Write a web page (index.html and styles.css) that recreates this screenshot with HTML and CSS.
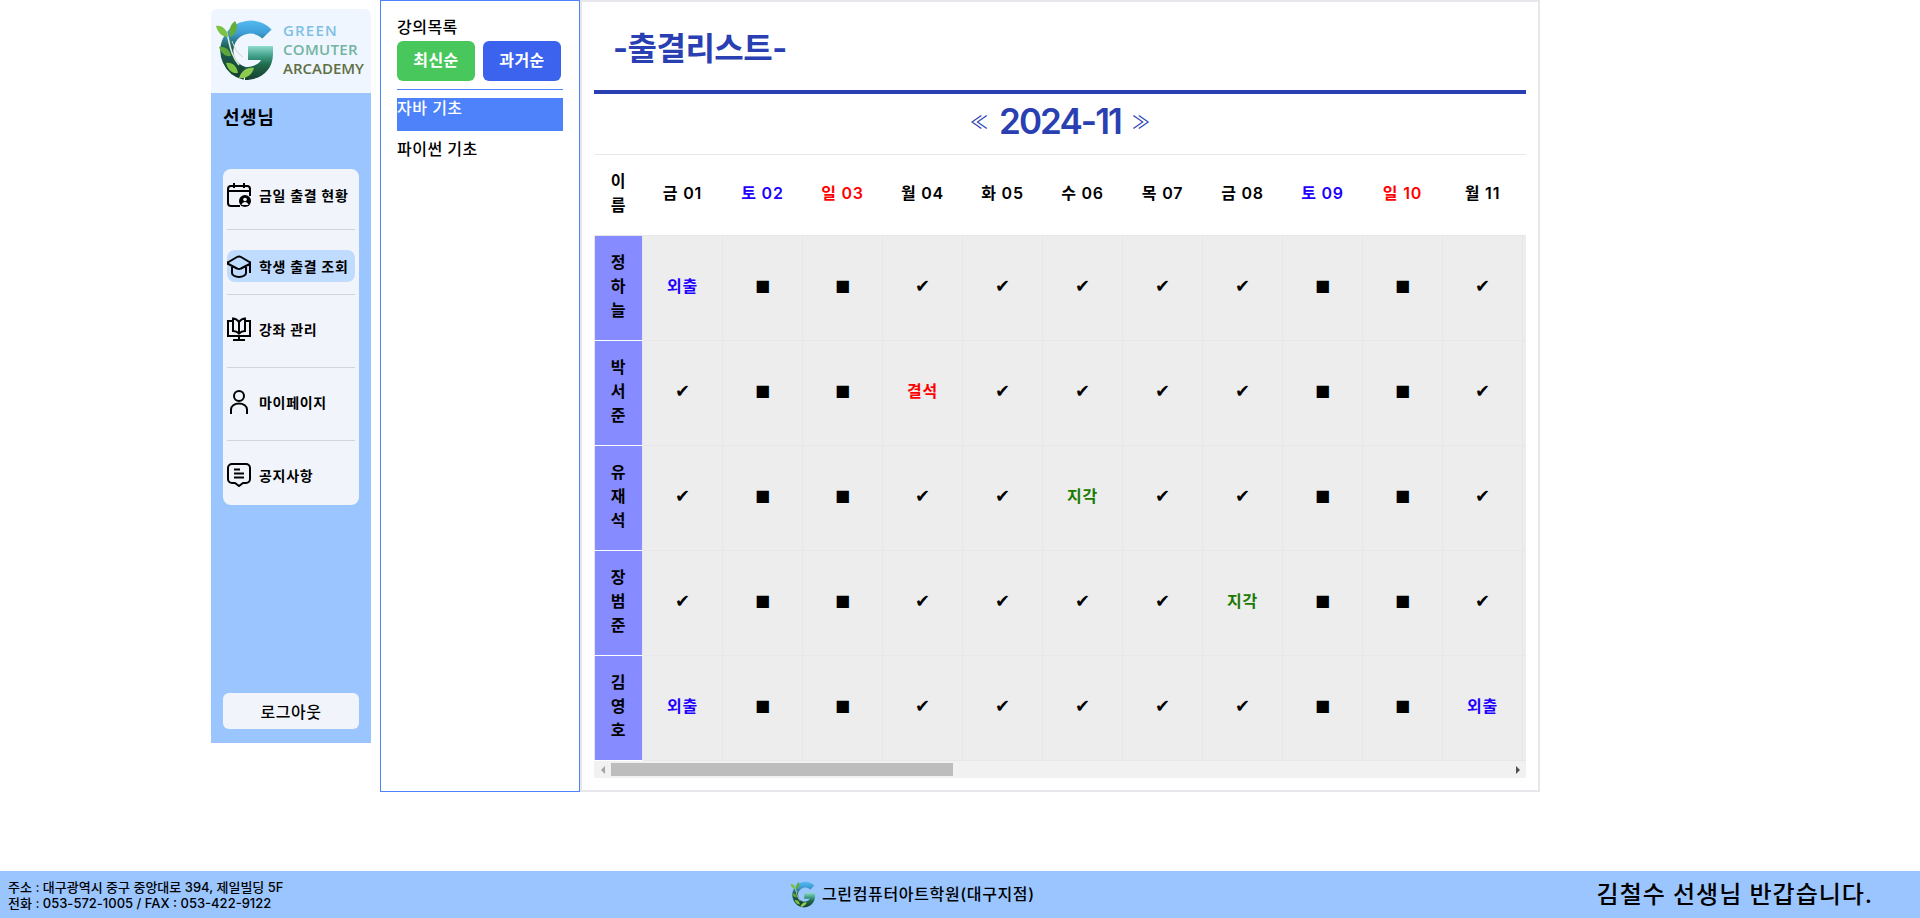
FILE: index.html
```html
<!DOCTYPE html>
<html lang="ko">
<head>
  <meta charset="UTF-8" />
  <meta name="viewport" content="width=device-width, initial-scale=1.0"/>
  <title>출결리스트</title>
  <link rel="stylesheet" href="styles.css">
</head>
<body>
  <svg class="defs" aria-hidden="true">
    <defs>
      <linearGradient id="ring" x1="0" y1="0" x2="0" y2="62" gradientUnits="userSpaceOnUse">
        <stop offset="0" stop-color="#56bdf5"/>
        <stop offset="0.22" stop-color="#3f9fd8"/>
        <stop offset="0.45" stop-color="#1d6152"/>
        <stop offset="1" stop-color="#123a2a"/>
      </linearGradient>
      <linearGradient id="bar" x1="0" y1="27" x2="0" y2="61" gradientUnits="userSpaceOnUse">
        <stop offset="0" stop-color="#8fdccb"/>
        <stop offset="0.3" stop-color="#3f9f88"/>
        <stop offset="0.55" stop-color="#1f6a4c"/>
        <stop offset="1" stop-color="#173f2c"/>
      </linearGradient>
      <symbol id="logo-g" viewBox="0 0 58 62">
        <path d="M52 15A23.5 23.5 0 1 0 30 54.5" fill="none" stroke="url(#ring)" stroke-width="13"/>
        <path d="M33 27H58V35C58 51 46 61 30 61V48C38 48 44 45 46 41H33Z" fill="url(#bar)"/>
        <path d="M11 12C15 22 14 34 24 46" fill="none" stroke="#dfe9dc" stroke-width="1.6"/>
        <path d="M17 22C20 30 22 34 28 38" fill="none" stroke="#c9d8c8" stroke-width="1"/>
        <path d="M1 7C7 6 12 10 13 18C7 18 3 14 1 7Z" fill="#7cc243"/>
        <path d="M20 2C24 8 22 14 15 18C13 12 15 6 20 2Z" fill="#64ad3a"/>
        <path d="M4 28C10 27 15 31 16 37C10 38 6 34 4 28Z" fill="#5ea63a"/>
        <path d="M11 44C17 43 22 47 23 54C17 55 13 51 11 44Z" fill="#7cc243"/>
        <path d="M24 59C26 52 32 48 39 49C37 56 31 60 24 59Z" fill="#8ccb4f"/>
      </symbol>
    </defs>
  </svg>

  <div class="page">
    <aside class="sidebar">
      <div class="logo">
        <svg class="logo-mark"><use href="#logo-g"/></svg>
        <div class="logo-text">
          <span class="logo-green">GREEN</span>
          <span class="logo-teal">COMUTER</span>
          <span class="logo-olive">ARCADEMY</span>
        </div>
      </div>
      <div class="side-body">
        <h2 class="role">선생님</h2>
        <ul class="nav">
          <li>
            <a class="nav-link">
              <svg class="nav-icon" viewBox="0 0 24 24"><path d="M23 13V6a3 3 0 0 0-3-3H4a3 3 0 0 0-3 3v14a3 3 0 0 0 3 3h9M1 8h22M7 0v5M17 0v5"/><circle class="solid" cx="18" cy="18" r="6"/><circle class="hole" cx="18" cy="16.500" r="1.800"/><path class="hole" d="M14.500 22c.5-2 2-3 3.500-3s3 1 3.500 3z"/></svg>
              금일 출결 현황
            </a>
          </li>
          <li>
            <a class="nav-link active">
              <svg class="nav-icon" viewBox="0 0 24 24"><path d="M10 3a4 4 0 0 1 4 0l8.500 5a1 1 0 0 1 0 2L14 14.500a4 4 0 0 1-4 0L1.500 10a1 1 0 0 1 0-2zM5 13v6c0 2 3 4 7 4s7-2 7-4v-6M23 9v10"/></svg>
              학생 출결 조회
            </a>
          </li>
          <li>
            <a class="nav-link">
              <svg class="nav-icon" viewBox="0 0 24 24"><path d="M5 4H1v15h22V4h-4M12 19v4M6 23h12"/><path d="M12 5C10.500 3 8.500 1.500 6 1.500V14c2.500 0 4.500 1 6 2.500 1.500-1.500 3.500-2.500 6-2.500V1.500C15.500 1.500 13.500 3 12 5zM12 5v11.500"/></svg>
              강좌 관리
            </a>
          </li>
          <li>
            <a class="nav-link">
              <svg class="nav-icon" viewBox="0 0 24 24"><circle cx="12" cy="6" r="5"/><path d="M4 24v-4.500C4 16 7.500 13.500 12 13.500s8 2.500 8 6V24"/></svg>
              마이페이지
            </a>
          </li>
          <li>
            <a class="nav-link">
              <svg class="nav-icon" viewBox="0 0 24 24"><path d="M5 1h14a4 4 0 0 1 4 4v11a4 4 0 0 1-4 4h-3l-4 3-4-3H5a4 4 0 0 1-4-4V5a4 4 0 0 1 4-4zM7 6.500h6M7 10.500h10M7 14.500h10"/></svg>
              공지사항
            </a>
          </li>
        </ul>
        <button class="logout">로그아웃</button>
      </div>
    </aside>

    <section class="courses">
      <div class="courses-label">강의목록</div>
      <div class="sort-btns">
        <button class="sort-btn newest">최신순</button>
        <button class="sort-btn oldest">과거순</button>
      </div>
      <hr class="courses-line">
      <div class="course selected">자바 기초</div>
      <div class="course">파이썬 기초</div>
    </section>

    <main class="content">
      <div class="title-bar">
        <h1>-출결리스트-</h1>
      </div>
      <div class="month-bar">
        <a class="month-arrow">≪</a>
        <span class="month">2024-11</span>
        <a class="month-arrow">≫</a>
      </div>
      <div class="table-wrap">
        <table class="attendance" id="attendance"></table>
      </div>
      <div class="scrollbar">
        <span class="scroll-btn left"></span>
        <span class="scroll-track"><span class="scroll-thumb"></span></span>
        <span class="scroll-btn right"></span>
      </div>
    </main>
  </div>

  <footer class="footer">
    <div class="address">
      <div>주소 : 대구광역시 중구 중앙대로 394, 제일빌딩 5F</div>
      <div>전화 : 053-572-1005 / FAX : 053-422-9122</div>
    </div>
    <div class="brand">
      <svg class="brand-mark"><use href="#logo-g"/></svg>
      <span>그린컴퓨터아트학원(대구지점)</span>
    </div>
    <div class="greeting">김철수 선생님 반갑습니다.</div>
  </footer>

  <script src="app.js"></script>
</body>
</html>
```

FILE: styles.css
```css
:root {
  --side-blue: #9ac5ff;
  --panel: #f1f5fb;
  --line-blue: #4d82fb;
  --navy: #2a3fb1;
  --border: #e5e7eb;
}

body {
  margin: 0;
  height: 100vh;
  display: flex;
  flex-direction: column;
  font-family: Inter, "Noto Sans CJK KR", sans-serif;
  color: #000;
  background: #fff;
  overflow: hidden;
}

.defs {
  display: block;
  width: 0;
  height: 0;
}

.page {
  flex: 1;
  display: flex;
  align-items: flex-start;
  padding-left: 211px;
}

/* sidebar */
.sidebar {
  width: 160px;
  height: 734px;
  margin: 9px 9px 0 0;
  display: flex;
  flex-direction: column;
}

.logo {
  box-sizing: border-box;
  height: 84px;
  display: flex;
  align-items: center;
  gap: 10px;
  padding: 0 0 3px 4px;
  background: #eff6ff;
  border-radius: 6px 6px 0 0;
}

.logo-mark {
  width: 58px;
  height: 62px;
}

.logo-text {
  display: flex;
  flex-direction: column;
  font-family: "Open Sans", sans-serif;
  font-size: 15px;
  font-weight: 600;
  line-height: 19px;
}

.logo-green { color: #7fc0e4; letter-spacing: 0.08em; }
.logo-teal { color: #72b49f; letter-spacing: 0.02em; }
.logo-olive { color: #5f6f42; }

.side-body {
  flex: 1;
  display: flex;
  flex-direction: column;
  padding: 0 12px 14px;
  background: var(--side-blue);
}

.role {
  margin: 13px 0 39px;
  height: 24px;
  font-size: 18px;
  line-height: 24px;
  font-weight: 700;
  letter-spacing: 0.03em;
}

.nav {
  list-style: none;
  margin: 0;
  padding: 0 4px;
  background: var(--panel);
  border-radius: 8px;
}

.nav li {
  padding: 18px 0 22px;
  border-bottom: 1px solid #d1d5db;
}

.nav li:nth-child(1) { padding: 10px 0 18px; }
.nav li:nth-child(2) { padding: 20px 0 12px; }
.nav li:last-child { padding: 18px 0 14px; border-bottom: none; }

.nav-link {
  height: 32px;
  display: flex;
  align-items: center;
  gap: 8px;
  font-size: 14px;
  font-weight: 700;
  letter-spacing: 0.05em;
  border-radius: 8px;
}

.nav-link.active {
  background: #bfdbfe;
}

.nav-icon {
  flex: none;
  width: 24px;
  height: 24px;
  fill: none;
  stroke: #000;
  stroke-width: 2;
}

.nav-icon .solid {
  fill: #000;
  stroke: none;
}

.nav-icon .hole {
  fill: #f1f5fb;
  stroke: none;
}

.logout {
  margin-top: auto;
  height: 36px;
  border: none;
  border-radius: 6px;
  background: var(--panel);
  font-family: inherit;
  font-size: 16px;
  font-weight: 500;
  letter-spacing: 0.03em;
}

/* course list */
.courses {
  box-sizing: border-box;
  width: 200px;
  height: 792px;
  padding: 15px 16px 0;
  border: 1px solid var(--line-blue);
  font-size: 16px;
  letter-spacing: 0.03em;
  font-weight: 500;
}

.courses-label {
  height: 25px;
  line-height: 22px;
}

.sort-btns {
  display: flex;
  gap: 8px;
}

.sort-btn {
  width: 78px;
  height: 40px;
  padding: 0 0 5px;
  border: none;
  border-radius: 6px;
  color: #fff;
  font-family: inherit;
  font-size: 16px;
  font-weight: 700;
  letter-spacing: 0.03em;
}

.newest { background: #48c75c; }
.oldest { background: #3b63ee; }

.courses-line {
  height: 1px;
  margin: 8px 0;
  border: none;
  background: var(--line-blue);
}

.course {
  height: 33px;
  line-height: 20px;
  margin-bottom: 8px;
}

.course.selected {
  background: var(--line-blue);
  color: #fff;
}

/* attendance */
.content {
  box-sizing: border-box;
  width: 960px;
  height: 792px;
  padding: 0 12px;
  border: 2px solid var(--border);
}

.title-bar {
  height: 88px;
  display: flex;
  align-items: center;
  padding-left: 19px;
  border-bottom: 4px solid var(--navy);
}

.title-bar h1 {
  margin: 0;
  font-size: 32px;
  font-weight: 700;
  color: var(--navy);
  letter-spacing: -0.015em;
}

.month-bar {
  box-sizing: border-box;
  height: 60px;
  display: flex;
  align-items: center;
  justify-content: center;
  gap: 11px;
  padding-bottom: 7px;
  color: var(--navy);
}

.month {
  font-size: 35px;
  font-weight: 600;
  letter-spacing: -0.055em;
}

.month-arrow {
  font-size: 18px;
}

.table-wrap {
  overflow: hidden;
}

.scrollbar {
  height: 17px;
  display: flex;
  background: #f1f1f1;
}

.scroll-btn {
  flex: none;
  width: 17px;
  display: flex;
  align-items: center;
  justify-content: center;
}

.scroll-btn::before {
  content: "";
  border: 4px solid transparent;
}

.scroll-btn.left::before {
  border-left-width: 0;
  border-right: 4px solid #a3a3a3;
}

.scroll-btn.right::before {
  border-right-width: 0;
  border-left: 4px solid #505050;
}

.scroll-track {
  flex: 1;
  padding: 2px 0;
}

.scroll-thumb {
  display: block;
  width: 342px;
  height: 13px;
  background: #bdbdbd;
}

.attendance {
  table-layout: fixed;
  width: 2448px;
  border-collapse: collapse;
}

.attendance th,
.attendance td {
  box-sizing: border-box;
  width: 80px;
  padding: 14px 8px 18px;
  border: 1px solid var(--border);
  text-align: center;
  font-size: 16px;
  line-height: 24px;
  letter-spacing: 0.05em;
}

.attendance thead th {
  font-weight: 600;
  border-left: none;
  border-right: none;
}

.attendance td {
  background: #ededed;
  font-weight: 700;
}

.attendance .name {
  width: 48px;
  padding: 14px 12px 18px;
  background: #868cff;
  font-weight: 700;
  border-top-color: #fff;
  border-bottom-color: #fff;
}

.attendance thead .name {
  background: #fff;
  border-color: var(--border);
}

.sat { color: #2200ff; }
.sun { color: #ff0000; }
.out { color: #2200ff; }
.absent { color: #ff0000; }
.late { color: #1a7a00; }

.attendance .mark {
  font-family: "DejaVu Sans", sans-serif;
  font-weight: 400;
  letter-spacing: 0;
}

.attendance .check {
  font-size: 18px;
}

/* footer */
.footer {
  height: 47px;
  display: grid;
  grid-template-columns: 782px 1fr auto;
  align-items: center;
  padding: 0 47px 0 8px;
  background: var(--side-blue);
}

.address {
  font-size: 13px;
  line-height: 16px;
  font-weight: 500;
}

.brand {
  display: flex;
  align-items: center;
  gap: 7px;
  font-size: 16px;
  font-weight: 500;
  letter-spacing: 0.04em;
}

.brand span {
  padding-bottom: 4px;
}

.brand-mark {
  width: 25px;
  height: 27px;
}

.greeting {
  padding-bottom: 5px;
  font-size: 24px;
  font-weight: 500;
  letter-spacing: 0.04em;
}
```

FILE: app.js
```js
const WEEKDAYS = ['일', '월', '화', '수', '목', '금', '토'];
const LABELS = { out: '외출', absent: '결석', late: '지각' };

const students = [
  { name: '정하늘', marks: { 1: 'out' } },
  { name: '박서준', marks: { 4: 'absent' } },
  { name: '유재석', marks: { 6: 'late' } },
  { name: '장범준', marks: { 8: 'late' } },
  { name: '김영호', marks: { 1: 'out', 11: 'out' } },
];

const days = [];
for (let d = 1; d <= 30; d++) {
  days.push({ date: d, weekday: new Date(2024, 10, d).getDay() });
}

const dayClass = (day) => (day.weekday === 6 ? 'sat' : day.weekday === 0 ? 'sun' : '');

const renderCell = (student, day) => {
  const mark = student.marks[day.date];
  if (mark) return `<td class="${mark}">${LABELS[mark]}</td>`;
  if (day.weekday === 0 || day.weekday === 6) return '<td class="mark">■</td>';
  return '<td class="mark check">✔</td>';
};

const head = days
  .map((day) => `<th class="${dayClass(day)}">${WEEKDAYS[day.weekday]} ${String(day.date).padStart(2, '0')}</th>`)
  .join('');

const rows = students
  .map((student) => `<tr><th class="name">${student.name}</th>${days.map((day) => renderCell(student, day)).join('')}</tr>`)
  .join('');

document.getElementById('attendance').innerHTML = `<thead><tr><th class="name">이름</th>${head}</tr></thead><tbody>${rows}</tbody>`;
```
